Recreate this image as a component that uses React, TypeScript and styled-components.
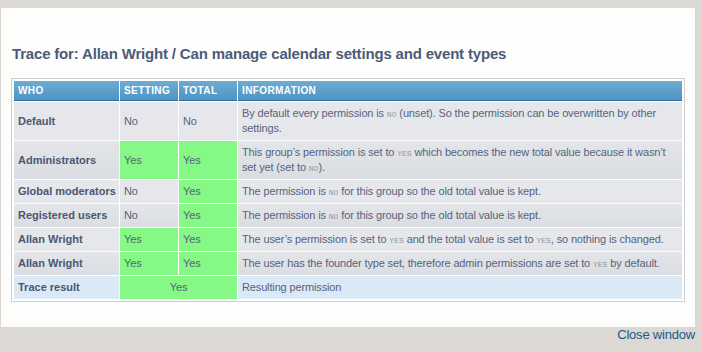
import React from "react";
import styled, { createGlobalStyle } from "styled-components";

const Global = createGlobalStyle`
  html, body { margin: 0; padding: 0; }
  body {
    background: #dcd8d4;
    font-family: "Liberation Sans", Arial, sans-serif;
    width: 702px;
    height: 352px;
    overflow: hidden;
  }
`;

const Page = styled.div`
  padding: 8px 7px 0 1px;
`;

const Panel = styled.div`
  background: #fdfefc;
  height: 319px;
  box-sizing: border-box;
  padding: 36px 10px 0 10px;
`;

const Title = styled.h2`
  margin: 0 0 14px 1px;
  font-size: 15px;
  line-height: 20px;
  font-weight: bold;
  letter-spacing: -0.18px;
  color: #4c5b78;
`;

const Table = styled.table`
  width: 674px;
  border: 1px solid #cdcfd3;
  border-spacing: 1px;
  padding: 1px;
  background: #fff;
  table-layout: fixed;
`;

const Th = styled.th<{ $w?: number }>`
  width: ${(p) => (p.$w ? `${p.$w}px` : "auto")};
  height: 20px;
  padding: 0 4px;
  box-sizing: border-box;
  text-align: left;
  font-size: 10px;
  font-weight: bold;
  letter-spacing: 0.4px;
  text-transform: uppercase;
  color: #fff;
  background: linear-gradient(#6dabd3, #4f94c4);
  border-bottom: 1px solid #2f6d9a;
`;

type Tone = "grey" | "dark" | "blue" | "green";

const bg: Record<Tone, string> = {
  grey: "#e5e7eb",
  dark: "linear-gradient(#e3e5e9, #dadde1)",
  blue: "#dbe8f5",
  green: "#85f885",
};

const Td = styled.td<{ $tone: Tone; $bold?: boolean; $center?: boolean }>`
  padding: 4px 4px;
  font-size: 11px;
  line-height: 15px;
  vertical-align: middle;
  white-space: ${(p) => (p.$bold ? "nowrap" : "normal")};
  letter-spacing: ${(p) => (p.$bold ? "0" : "-0.14px")};
  color: ${(p) => (p.$bold ? "#4a5872" : "#556480")};
  font-weight: ${(p) => (p.$bold ? "bold" : "normal")};
  text-align: ${(p) => (p.$center ? "center" : "left")};
  background: ${(p) => bg[p.$tone]};
`;

const Samp = styled.span`
  font-family: "Liberation Mono", monospace;
  font-size: 8px;
  line-height: 1;
  letter-spacing: 0;
  text-transform: uppercase;
  color: #8e98a6;
`;

const Footer = styled.div`
  display: flex;
  justify-content: flex-end;
`;

const CloseLink = styled.a`
  font-size: 13px;
  line-height: 16px;
  letter-spacing: -0.2px;
  color: #1a5a8a;
  text-decoration: none;
  cursor: pointer;
`;

type Row = {
  who: string;
  setting: "Yes" | "No";
  total: "Yes" | "No";
  info: React.ReactNode;
  tone: Tone;
};

const rows: Row[] = [
  {
    who: "Default",
    setting: "No",
    total: "No",
    tone: "grey",
    info: (
      <>
        By default every permission is <Samp>no</Samp> (unset). So the permission can be overwritten by other settings.
      </>
    ),
  },
  {
    who: "Administrators",
    setting: "Yes",
    total: "Yes",
    tone: "dark",
    info: (
      <>
        This group’s permission is set to <Samp>yes</Samp> which becomes the new total value because it wasn’t set yet (set to <Samp>no</Samp>).
      </>
    ),
  },
  {
    who: "Global moderators",
    setting: "No",
    total: "Yes",
    tone: "grey",
    info: (
      <>
        The permission is <Samp>no</Samp> for this group so the old total value is kept.
      </>
    ),
  },
  {
    who: "Registered users",
    setting: "No",
    total: "Yes",
    tone: "dark",
    info: (
      <>
        The permission is <Samp>no</Samp> for this group so the old total value is kept.
      </>
    ),
  },
  {
    who: "Allan Wright",
    setting: "Yes",
    total: "Yes",
    tone: "grey",
    info: (
      <>
        The user’s permission is set to <Samp>yes</Samp> and the total value is set to <Samp>yes</Samp>, so nothing is changed.
      </>
    ),
  },
  {
    who: "Allan Wright",
    setting: "Yes",
    total: "Yes",
    tone: "dark",
    info: (
      <>
        The user has the founder type set, therefore admin permissions are set to <Samp>yes</Samp> by default.
      </>
    ),
  },
];

export default function App() {
  return (
    <>
      <Global />
      <Page>
        <Panel>
          <Title>Trace for: Allan Wright / Can manage calendar settings and event types</Title>
          <Table>
            <thead>
              <tr>
                <Th $w={105}>Who</Th>
                <Th $w={58}>Setting</Th>
                <Th $w={58}>Total</Th>
                <Th>Information</Th>
              </tr>
            </thead>
            <tbody>
              {rows.map((r, i) => (
                <tr key={i}>
                  <Td $tone={r.tone} $bold>
                    {r.who}
                  </Td>
                  <Td $tone={r.setting === "Yes" ? "green" : r.tone}>{r.setting}</Td>
                  <Td $tone={r.total === "Yes" ? "green" : r.tone}>{r.total}</Td>
                  <Td $tone={r.tone}>{r.info}</Td>
                </tr>
              ))}
              <tr>
                <Td $tone="blue" $bold>
                  Trace result
                </Td>
                <Td $tone="green" colSpan={2} $center>
                  Yes
                </Td>
                <Td $tone="blue">Resulting permission</Td>
              </tr>
            </tbody>
          </Table>
        </Panel>
        <Footer>
          <CloseLink>Close window</CloseLink>
        </Footer>
      </Page>
    </>
  );
}
